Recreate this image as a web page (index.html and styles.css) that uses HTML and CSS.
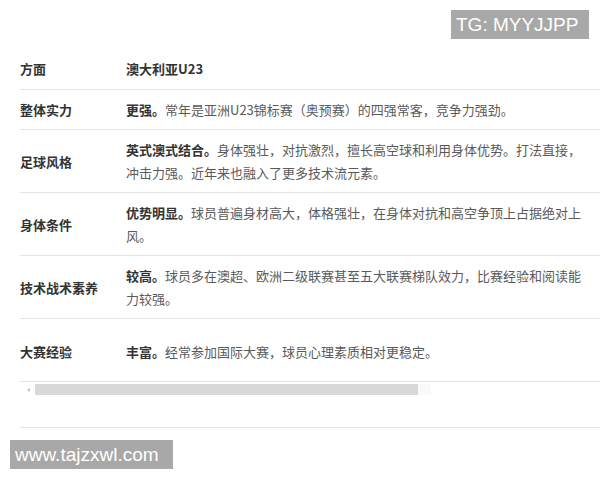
FILE: index.html
```html
<!DOCTYPE html>
<html lang="zh-CN">
<head>
<meta charset="utf-8">
<title>澳大利亚U23</title>
<link rel="stylesheet" href="styles.css">
</head>
<body>
<div class="page">
  <div class="table">
    <div class="row head">
      <div class="label">方面</div>
      <div class="cell"><b>澳大利亚U23</b></div>
    </div>
    <div class="row">
      <div class="label">整体实力</div>
      <div class="cell"><b>更强。</b>常年是亚洲U23锦标赛（奥预赛）的四强常客，竞争力强劲。</div>
    </div>
    <div class="row">
      <div class="label">足球风格</div>
      <div class="cell"><b>英式澳式结合。</b>身体强壮，对抗激烈，擅长高空球和利用身体优势。打法直接，冲击力强。近年来也融入了更多技术流元素。</div>
    </div>
    <div class="row">
      <div class="label">身体条件</div>
      <div class="cell"><b>优势明显。</b>球员普遍身材高大，体格强壮，在身体对抗和高空争顶上占据绝对上风。</div>
    </div>
    <div class="row">
      <div class="label">技术战术素养</div>
      <div class="cell"><b>较高。</b>球员多在澳超、欧洲二级联赛甚至五大联赛梯队效力，比赛经验和阅读能力较强。</div>
    </div>
    <div class="row last">
      <div class="label">大赛经验</div>
      <div class="cell"><b>丰富。</b>经常参加国际大赛，球员心理素质相对更稳定。</div>
    </div>
    <div class="scrollbar">
      <span class="arrow"></span>
      <span class="thumb"></span>
    </div>
  </div>
</div>
<div class="mark mark-tg">TG: MYYJJPP</div>
<div class="mark mark-www">www.tajzxwl.com</div>
</body>
</html>
```
FILE: styles.css
```css
html, body {
  margin: 0;
  padding: 0;
  background: #fff;
}
body {
  width: 600px;
  height: 480px;
  overflow: hidden;
  position: relative;
  font-family: "Noto Sans CJK SC", "Microsoft YaHei", sans-serif;
  font-size: 13px;
  color: #5a5a5a;
}
.page {
  padding: 50px 0 0 20px;
}
.table {
  display: flex;
  flex-direction: column;
}
.row {
  display: grid;
  grid-template-columns: 106px 1fr;
  align-items: center;
  line-height: 23px;
  padding: 8px 0;
  border-bottom: 1px solid #e4e4e4;
}
.row.head {
  padding: 7px 0 9px;
}
.row.last {
  padding: 21px 0 18px;
  border-bottom: none;
}
.label {
  font-weight: bold;
  color: #333;
}
.cell {
  padding-right: 12px;
}
.cell b {
  font-weight: bold;
  color: #333;
}
.scrollbar {
  height: 43px;
  border-top: 1px solid #e4e4e4;
  border-bottom: 1px solid #e4e4e4;
  display: flex;
  align-items: flex-start;
  padding-top: 2px;
  box-sizing: content-box;
}
.arrow {
  width: 0;
  height: 0;
  margin: 4px 5px 0 7px;
  border-top: 2px solid transparent;
  border-bottom: 2px solid transparent;
  border-right: 3px solid #c4c4c4;
}
.thumb {
  width: 383px;
  height: 11px;
  background: #d8d8d8;
  box-shadow: 13px 0 0 #fafafa;
}
.mark {
  position: absolute;
  background: #a8a8a8;
  color: #fff;
  font-family: "Liberation Sans", Arial, sans-serif;
  font-size: 19px;
  line-height: 29px;
  height: 29px;
  padding: 0 5px;
  box-sizing: border-box;
}
.mark-tg {
  top: 10px;
  left: 451px;
  width: 138px;
}
.mark-www {
  top: 440px;
  left: 10px;
  width: 163px;
}
```
